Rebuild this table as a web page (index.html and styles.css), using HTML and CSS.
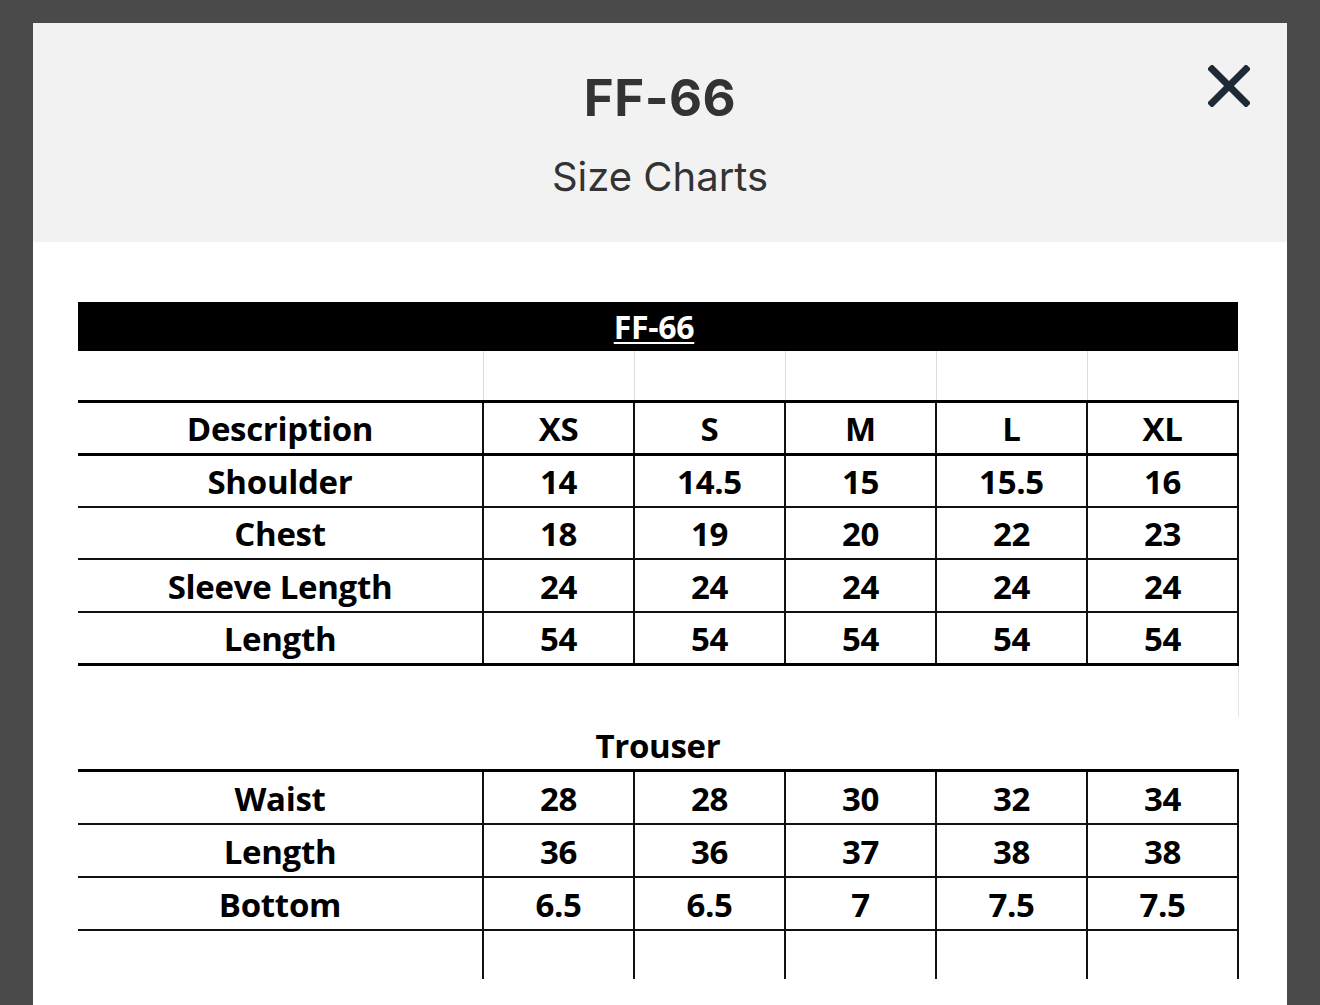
FILE: index.html
```html
<!DOCTYPE html>
<html>
<head>
<meta charset="utf-8">
<link rel="stylesheet" href="styles.css">
</head>
<body>
<div class="modal">
  <div class="modal-head">
    <h1 class="title">FF-66</h1>
    <p class="subtitle">Size Charts</p>
    <button class="close" aria-label="Close">
      <svg width="42" height="42" viewBox="0 0 42 42"><path d="M4 4 L38 38 M38 4 L4 38" stroke="#1f2a37" stroke-width="7" stroke-linecap="square" fill="none"/></svg>
    </button>
  </div>
  <div class="modal-body">
    <table class="chart">
      <colgroup><col class="c-desc"><col class="c-size"><col class="c-size"><col class="c-size"><col class="c-size"><col class="c-size"></colgroup>
      <tr class="r-title"><td colspan="6"><span>FF-66</span></td></tr>
      <tr class="r-blank"><td></td><td></td><td></td><td></td><td></td><td></td></tr>
      <tr class="r-data r-thick-top"><td>Description</td><td>XS</td><td>S</td><td>M</td><td>L</td><td>XL</td></tr>
      <tr class="r-data r-thick-top"><td>Shoulder</td><td>14</td><td>14.5</td><td>15</td><td>15.5</td><td>16</td></tr>
      <tr class="r-data"><td>Chest</td><td>18</td><td>19</td><td>20</td><td>22</td><td>23</td></tr>
      <tr class="r-data r-tall"><td>Sleeve Length</td><td>24</td><td>24</td><td>24</td><td>24</td><td>24</td></tr>
      <tr class="r-data r-thick-bottom"><td>Length</td><td>54</td><td>54</td><td>54</td><td>54</td><td>54</td></tr>
      <tr class="r-gap"><td colspan="5"></td><td class="faint"></td></tr>
      <tr class="r-section"><td colspan="6">Trouser</td></tr>
      <tr class="r-data r-tall r-thick-top"><td>Waist</td><td>28</td><td>28</td><td>30</td><td>32</td><td>34</td></tr>
      <tr class="r-data r-tall"><td>Length</td><td>36</td><td>36</td><td>37</td><td>38</td><td>38</td></tr>
      <tr class="r-data r-tall"><td>Bottom</td><td>6.5</td><td>6.5</td><td>7</td><td>7.5</td><td>7.5</td></tr>
      <tr class="r-end"><td></td><td></td><td></td><td></td><td></td><td></td></tr>
    </table>
  </div>
</div>
</body>
</html>
```
FILE: styles.css
```css
html, body {
  margin: 0;
  padding: 0;
  height: 100%;
  overflow: hidden;
}
body {
  background: #4a4a4a;
  padding: 23px 33px 0;
  box-sizing: border-box;
}
.modal {
  background: #ffffff;
  height: 100%;
}
.modal-head {
  position: relative;
  background: #f2f2f2;
  height: 219px;
  box-sizing: border-box;
  padding-top: 44px;
  text-align: center;
  font-family: Inter, "Open Sans", sans-serif;
  color: #333333;
}
.title {
  margin: 0;
  font-size: 51px;
  font-weight: 700;
  line-height: 62px;
  letter-spacing: 0.5px;
}
.subtitle {
  margin: 24px 0 0;
  font-size: 40px;
  font-weight: 400;
  line-height: 48px;
}
.close {
  position: absolute;
  top: 42px;
  right: 37px;
  width: 42px;
  height: 42px;
  padding: 0;
  border: 0;
  background: transparent;
  cursor: pointer;
}
.close svg { display: block; }
.modal-body {
  padding: 60px 49px 0 45px;
}
.chart {
  width: 1160px;
  border-collapse: collapse;
  table-layout: fixed;
  font-family: "Open Sans", "Liberation Sans", sans-serif;
  font-weight: 700;
  font-size: 33px;
  color: #000000;
  letter-spacing: -0.3px;
}
.c-desc { width: 405px; }
.c-size { width: 151px; }
.chart td {
  padding: 0;
  text-align: center;
  vertical-align: middle;
  line-height: 40px;
}
.r-title td {
  background: #000000;
  color: #ffffff;
  height: 49px;
  font-size: 32px;
}
.r-title span {
  text-decoration: underline;
  text-decoration-thickness: 2px;
  text-underline-offset: 3px;
  position: relative;
  left: -4px;
}
.r-blank td {
  height: 49px;
  border-left: 1px solid #dcdcdc;
  border-right: 1px solid #dcdcdc;
}
.r-blank td:first-child { border-left: 0; }
.r-data td {
  height: 48px;
  padding-top: 2px;
  border-top: 2px solid #111111;
  border-bottom: 2px solid #111111;
  border-left: 2px solid #111111;
  border-right: 2px solid #111111;
}
.r-data.r-tall td { height: 49px; }
.r-data td:first-child { border-left: 0; }
.r-thick-top td { border-top: 3px solid #000000; }
.r-thick-bottom td { border-bottom: 3px solid #000000; }
.r-gap td {
  height: 51px;
}
.r-gap td.faint { border-right: 1px solid #e6e6e6; }
.r-section td {
  height: 52px;
  vertical-align: bottom;
  line-height: 46px;
}
.r-end td {
  height: 48px;
  border-left: 2px solid #111111;
  border-right: 2px solid #111111;
}
.r-end td:first-child { border-left: 0; }
```
